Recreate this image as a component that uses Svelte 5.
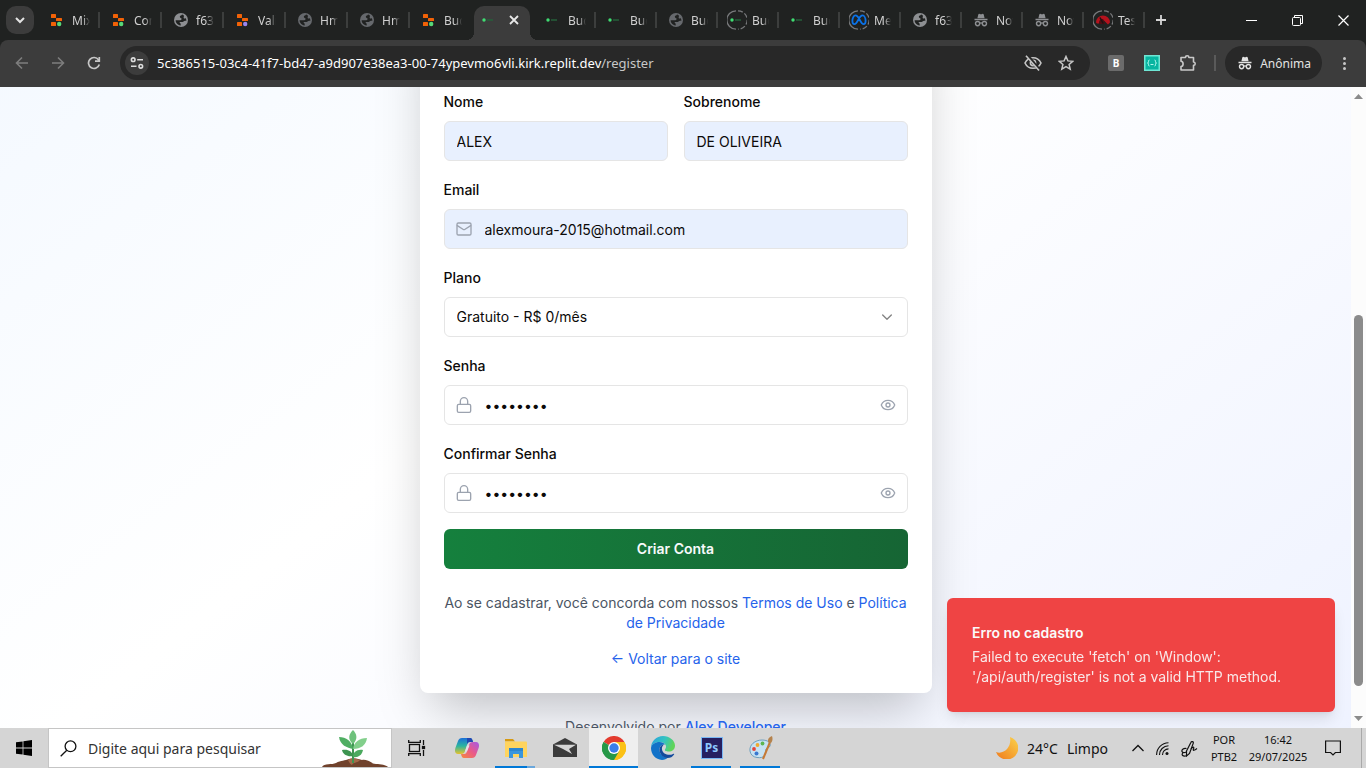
<script>
  const tabs = [
    { icon: 'replit', dot: '#57d977', title: 'Mixer' },
    { icon: 'replit', dot: '#57d977', title: 'Conta' },
    { icon: 'globe', title: 'f63a' },
    { icon: 'replit', dot: '#9a86f0', title: 'Valid' },
    { icon: 'globe', dim: true, title: 'Hmm' },
    { icon: 'globe', dim: true, title: 'Hmm' },
    { icon: 'replit', dot: '#57d977', title: 'Budget' },
    { icon: 'dash', title: 'Budget', active: true },
    { icon: 'dash', title: 'Budget' },
    { icon: 'dash', title: 'Budget', slim: true },
    { icon: 'globe', dim: true, title: 'Budget', slim: true },
    { icon: 'dash', ring: true, title: 'Budget', slim: true },
    { icon: 'dash', title: 'Budget', slim: true },
    { icon: 'meta', ring: true, title: 'Meta', slim: true },
    { icon: 'globe', title: 'f63a', slim: true },
    { icon: 'incognito', title: 'Nova', slim: true },
    { icon: 'incognito', title: 'Nova', slim: true },
    { icon: 'gauge', ring: true, title: 'Teste', slim: true }
  ];

  let nome = 'ALEX';
  let sobrenome = 'DE OLIVEIRA';
  let email = 'alexmoura-2015@hotmail.com';
  let senha = 'segredo1';
  let confirma = 'segredo1';
</script>

{#snippet incognito()}
  <svg width="16" height="16" viewBox="0 0 16 16" fill="none" aria-hidden="true">
    <path d="M4.4 6.2 5.3 2.6c.2-.7.8-.9 1.4-.6.9.4 1.7.4 2.6 0 .6-.3 1.2-.1 1.4.6l.9 3.6z" fill="currentColor" />
    <path d="M1.5 7.5h13" stroke="currentColor" stroke-width="1.5" />
    <circle cx="4.6" cy="11.6" r="2.1" stroke="currentColor" stroke-width="1.4" />
    <circle cx="11.4" cy="11.6" r="2.1" stroke="currentColor" stroke-width="1.4" />
    <path d="M6.6 11.3c.9-.6 1.9-.6 2.8 0" stroke="currentColor" stroke-width="1.3" />
  </svg>
{/snippet}

{#snippet lock()}
  <svg class="lead" width="16" height="16" viewBox="0 0 24 24" fill="none" stroke="currentColor" stroke-width="2" stroke-linecap="round" stroke-linejoin="round" aria-hidden="true">
    <rect x="2" y="11" width="20" height="12" rx="2" />
    <path d="M6.5 11V6.5a5.5 5.5 0 0 1 11 0V11" />
  </svg>
{/snippet}

{#snippet eye()}
  <svg width="16" height="16" viewBox="0 0 24 24" fill="none" stroke="currentColor" stroke-width="2" stroke-linecap="round" stroke-linejoin="round" aria-hidden="true">
    <path d="M2.06 12.35a1 1 0 0 1 0-.7 10.75 10.75 0 0 1 19.88 0 1 1 0 0 1 0 .7 10.75 10.75 0 0 1-19.88 0" />
    <circle cx="12" cy="12" r="3" />
  </svg>
{/snippet}

<div class="desktop">
  <header class="browser">
    <div class="strip">
      <button class="tabsearch" aria-label="Pesquisar guias">
        <svg width="10" height="10" viewBox="0 0 10 10" fill="none" stroke="#e3e3e3" stroke-width="2"><path d="M1 3l4 4 4-4" /></svg>
      </button>
      <div class="tabs">
        {#each tabs as tab}
          <div class="tab" class:active={tab.active} class:slim={tab.slim}>
            <span class="fav" class:dim={tab.dim}>
              {#if tab.ring}
                <svg class="ring" width="20" height="20" viewBox="0 0 20 20" fill="none" stroke="#77797b" stroke-width="1.3" aria-hidden="true">
                  <path d="M9 .8A9.2 9.2 0 0 0 9 19.2" />
                  <path d="M11 .8A9.2 9.2 0 0 1 11 19.2" stroke-dasharray="5 2" />
                </svg>
              {/if}
              {#if tab.icon === 'replit'}
                <svg width="16" height="16" viewBox="0 0 16 16" aria-hidden="true">
                  <rect x="2" y="2" width="5" height="4" rx=".6" fill="#f26207" />
                  <rect x="7" y="6" width="6" height="3" rx=".6" fill="#f26207" />
                  <rect x="2" y="10" width="5" height="4" rx=".6" fill="#f26207" />
                  <circle cx="10.2" cy="12" r="2.2" fill={tab.dot} />
                </svg>
              {:else if tab.icon === 'globe'}
                <svg width="16" height="16" viewBox="0 0 16 16" aria-hidden="true">
                  <circle cx="8" cy="8" r="7" fill="currentColor" />
                  <path d="M9 2.500c-.3 1.300-2.200.8-2.200 2.200 0 1.200 1.800 1.100 1.800 2.300 0 1-1.200 1.300-2.600 1.200H2.600c.1 2 1 3.400 2.400 4.400.9.600 1.800.900 2.700.9v-1.300c0-1.200-1.200-1.200-1.200-2.200h3c1.200 0 1.500-1.200 2.600-1.200h1.300c0-1-.3-2-.8-2.800-.6.700-1.600.700-1.900 0-.4-1 .9-1.700-.1-2.700-.5-.4-1-.700-1.600-.8z" fill="#202221" />
                </svg>
              {:else if tab.icon === 'dash'}
                <svg width="16" height="16" viewBox="0 0 16 16" aria-hidden="true">
                  <circle cx="3" cy="8" r="1.700" fill="#3fdc72" />
                  <path d="M6 8h6" stroke="#24613a" stroke-width="1.500" />
                </svg>
              {:else if tab.icon === 'meta'}
                <svg width="16" height="16" viewBox="0 0 16 16" fill="none" stroke="#0a72e8" stroke-width="1.800" aria-hidden="true">
                  <path d="M8 6.500C6.800 4.300 5.700 3.400 4.500 3.400 2.700 3.400 1.400 6 1.400 9c0 2 .7 3.200 2 3.200C5 12.200 6.200 10 8 6.500c1.200-2.200 2.300-3.100 3.500-3.100 1.800 0 3.100 2.600 3.100 5.600 0 2-.7 3.200-2 3.200-1.600 0-2.800-2.200-4.600-5.700z" />
                </svg>
              {:else if tab.icon === 'gauge'}
                <svg width="16" height="16" viewBox="0 0 16 16" aria-hidden="true">
                  <path d="M1 10.500a7 7 0 0 1 14 0l-2 2-5-5 1 4H2z" fill="#b5121d" />
                  <path d="M4 11a4 4 0 0 1 4-4l2 5H4z" fill="#4d0d12" />
                  <path d="M8.200 11.500 5 5.500" stroke="#1c1214" stroke-width="1.500" />
                </svg>
              {:else}
                {@render incognito()}
              {/if}
            </span>
            {#if tab.active}
              <button class="x" aria-label="Fechar guia">
                <svg width="10" height="10" viewBox="0 0 10 10" stroke="#e8e8e8" stroke-width="1.800"><path d="M1 1l8 8M9 1l-8 8" /></svg>
              </button>
            {:else}
              <span class="title">{tab.title}</span>
            {/if}
          </div>
        {/each}
      </div>
      <button class="newtab" aria-label="Nova guia">
        <svg width="12" height="12" viewBox="0 0 12 12" stroke="#d5d5d5" stroke-width="1.800"><path d="M6 1v10M1 6h10" /></svg>
      </button>
      <div class="winctl">
        <button aria-label="Minimizar"><svg width="11" height="11" viewBox="0 0 11 11" stroke="#fff"><path d="M0 5.500h11" /></svg></button>
        <button aria-label="Restaurar"><svg width="11" height="11" viewBox="0 0 11 11" stroke="#fff" fill="none"><rect x=".5" y="2.500" width="8" height="8" rx="1" /><path d="M2.500 2.500v-2h8v8h-2" /></svg></button>
        <button aria-label="Fechar"><svg width="11" height="11" viewBox="0 0 11 11" stroke="#fff" stroke-width="1.200"><path d="M.5.5l10 10M10.500.5l-10 10" /></svg></button>
      </div>
    </div>

    <div class="toolbar">
      <button class="nav off" aria-label="Voltar"><svg width="14" height="14" viewBox="0 0 14 14" fill="none" stroke="currentColor" stroke-width="1.600"><path d="M13 7H2M7 1.500 1.500 7 7 12.500" /></svg></button>
      <button class="nav off" aria-label="Avançar"><svg width="14" height="14" viewBox="0 0 14 14" fill="none" stroke="currentColor" stroke-width="1.600"><path d="M1 7h11M7 1.500 12.500 7 7 12.500" /></svg></button>
      <button class="nav" aria-label="Recarregar"><svg width="14" height="14" viewBox="0 0 14 14" fill="none" stroke="currentColor" stroke-width="1.700"><path d="M12.300 8.500A5.500 5.500 0 1 1 11.500 3.800L12 4.800" /><path d="M12.300 1v4.200H8" /></svg></button>
      <div class="omnibox">
        <button class="site" aria-label="Informações do site">
          <svg width="14" height="14" viewBox="0 0 14 14" fill="none" stroke="#dcdcdc" stroke-width="1.600"><circle cx="3.200" cy="3.700" r="1.800" /><path d="M7.200 3.700H13M1 10.300h5.500" /><circle cx="10.800" cy="10.300" r="1.800" /></svg>
        </button>
        <span class="url">5c386515-03c4-41f7-bd47-a9d907e38ea3-00-74ypevmo6vli.kirk.replit.dev<span class="path">/register</span></span>
        <button class="obtn" aria-label="Cookies de terceiros bloqueados">
          <svg width="18" height="16" viewBox="0 0 18 16" fill="none" stroke="currentColor" stroke-width="1.600"><path d="M1 8c1.600-3.400 4.500-5.300 8-5.300S15.400 4.600 17 8c-1.600 3.400-4.500 5.300-8 5.300S2.600 11.400 1 8z" /><circle cx="9" cy="8" r="2.600" /><path d="M3.500.5 16 15.500" stroke="#282828" stroke-width="3" /><path d="M2 .8 15 15.500" /></svg>
        </button>
        <button class="obtn" aria-label="Adicionar aos favoritos">
          <svg width="16" height="16" viewBox="0 0 16 16" fill="none" stroke="currentColor" stroke-width="1.500"><path d="M8 1.500l1.900 4.400 4.800.4-3.600 3.200 1.100 4.700L8 11.700l-4.200 2.500 1.100-4.700L1.300 6.300l4.800-.4z" /></svg>
        </button>
      </div>
      <div class="exts">
        <button class="ext b" aria-label="Extensão B">B</button>
        <button class="ext json" aria-label="Extensão JSON">
          <svg width="16" height="16" viewBox="0 0 16 16" fill="none"><rect width="16" height="16" fill="#6fe6d4" /><rect x="1.500" y="1.500" width="13" height="13" fill="#08b5a1" /><path d="M5.500 5c-1 0-1 .5-1 1.500S4.200 8 3.500 8c.7 0 1 .5 1 1.500s0 1.500 1 1.500M10.500 5c1 0 1 .5 1 1.500s.3 1.500 1 1.500c-.7 0-1 .5-1 1.500s0 1.500-1 1.500M6.500 9.500h3" stroke="#c6fff6" stroke-width=".9" /></svg>
        </button>
        <button class="ext" aria-label="Extensões">
          <svg width="18" height="18" viewBox="0 0 18 18" fill="none" stroke="#c9c9c9" stroke-width="1.600" stroke-linejoin="round"><path d="M2 3.500h4.500a1.700 1.700 0 0 1 3.400 0H14.500V8a1.700 1.700 0 0 1 0 3.400V16H2v-3.500c2.800-.3 2.800-4.900 0-5.200z" /></svg>
        </button>
      </div>
      <span class="divider"></span>
      <button class="anon">{@render incognito()}<span>Anônima</span></button>
      <button class="more" aria-label="Menu"><i></i><i></i><i></i></button>
    </div>
  </header>

  <div class="viewport">
    <main class="page">
      <form class="card" on:submit|preventDefault>
        <div class="pair">
          <div class="field">
            <label for="nome">Nome</label>
            <input id="nome" class="filled" type="text" bind:value={nome} />
          </div>
          <div class="field">
            <label for="sobrenome">Sobrenome</label>
            <input id="sobrenome" class="filled" type="text" bind:value={sobrenome} />
          </div>
        </div>
        <div class="field">
          <label for="email">Email</label>
          <div class="wrap">
            <svg class="lead" width="16" height="16" viewBox="0 0 24 24" fill="none" stroke="currentColor" stroke-width="2" stroke-linecap="round" stroke-linejoin="round" aria-hidden="true">
              <rect x="1.500" y="3" width="21" height="18" rx="2" />
              <path d="m22 7-8.970 5.700a1.940 1.940 0 0 1-2.060 0L2 7" />
            </svg>
            <input id="email" class="filled iconed" type="email" bind:value={email} />
          </div>
        </div>
        <div class="field">
          <label for="plano">Plano</label>
          <div class="wrap">
            <select id="plano">
              <option>Gratuito - R$ 0/mês</option>
            </select>
            <svg class="trail chev" width="16" height="16" viewBox="0 0 24 24" fill="none" stroke="currentColor" stroke-width="2" stroke-linecap="round" stroke-linejoin="round" aria-hidden="true"><path d="m5.500 9 6.500 6.500L18.500 9" /></svg>
          </div>
        </div>
        <div class="field">
          <label for="senha">Senha</label>
          <div class="wrap">
            {@render lock()}
            <input id="senha" class="iconed" type="password" bind:value={senha} />
            <button type="button" class="trail" aria-label="Mostrar senha">{@render eye()}</button>
          </div>
        </div>
        <div class="field">
          <label for="confirma">Confirmar Senha</label>
          <div class="wrap">
            {@render lock()}
            <input id="confirma" class="iconed" type="password" bind:value={confirma} />
            <button type="button" class="trail" aria-label="Mostrar confirmação">{@render eye()}</button>
          </div>
        </div>
        <button class="submit" type="submit">Criar Conta</button>
        <p class="terms">Ao se cadastrar, você concorda com nossos <a href="#termos">Termos de Uso</a> e <a href="#privacidade">Política de Privacidade</a></p>
        <p class="back"><a href="#site">← Voltar para o site</a></p>
      </form>
      <p class="credit">Desenvolvido por <a href="#dev">Alex Developer</a></p>
    </main>
    <div class="toast" role="alert">
      <strong>Erro no cadastro</strong>
      <p>Failed to execute 'fetch' on 'Window': '/api/auth/register' is not a valid HTTP method.</p>
    </div>
    <div class="scroll" aria-hidden="true">
      <svg width="9" height="5" viewBox="0 0 9 5"><path d="M0 5 4.500 0 9 5z" fill="#8b8b8b" /></svg>
      <div class="track"><div class="thumb"></div></div>
      <svg width="9" height="5" viewBox="0 0 9 5"><path d="M0 0 4.500 5 9 0z" fill="#8b8b8b" /></svg>
    </div>
  </div>

  <footer class="taskbar">
    <button class="start" aria-label="Iniciar">
      <svg width="16" height="16" viewBox="0 0 16 16" fill="#000"><path d="M0 2.300 6.600 1.400v6.200H0zM7.400 1.300 16 0v7.600H7.400zM0 8.400h6.600v6.200L0 13.700zM7.400 8.400H16V16l-8.600-1.300z" /></svg>
    </button>
    <label class="search">
      <svg width="17" height="17" viewBox="0 0 17 17" fill="none" stroke="#111" stroke-width="1.300" aria-hidden="true"><circle cx="10.500" cy="6.300" r="5.400" /><path d="M6.800 10.200.7 16.300" /></svg>
      <input type="text" placeholder="Digite aqui para pesquisar" aria-label="Digite aqui para pesquisar" />
      <svg class="plant" width="66" height="38" viewBox="0 0 66 38" aria-hidden="true">
        <path d="M0 38c2-4 10-2 14-4 5-3 9-2 13-4 5-2 10 0 13 1 7-1 9 4 14 4s10 1 12 3z" fill="#70422c" />
        <path d="M26 31c4-3 9-1 12 0-2 3-7 2-8 5-2-1-3-3-4-5z" fill="#a3694a" />
        <path d="M31 34V8" stroke="#3e9450" stroke-width="2" />
        <path d="M31 15c-6-5-4-10 0-14 4 4 5 9 0 14z" fill="#6fc27c" />
        <path d="M31 20C25 19 18 16 17 8c7 0 13 4 14 12z" fill="#4fae62" />
        <path d="M31 20c1-7 6-11 14-11-1 7-6 11-14 11z" fill="#82cf8b" />
        <path d="M31 27c-5 1-10-1-11-6 6-1 10 1 11 6z" fill="#3d9450" />
        <path d="M31 28c0-5 4-8 10-7-1 5-5 8-10 7z" fill="#4ba95e" />
      </svg>
    </label>
    <nav class="apps" aria-label="Aplicativos">
      <button aria-label="Visão de tarefas">
        <svg width="18" height="16" viewBox="0 0 18 16" fill="none" stroke="#111" stroke-width="1.300"><rect x="1.500" y="4.500" width="10" height="7" /><path d="M.7 0v2.300h11.600V0M.7 16v-2.300h11.600V16M15.500 0v5M15.500 10v6" /><rect x="14.500" y="6.500" width="2" height="2" fill="#111" /></svg>
      </button>
      <button aria-label="Copilot">
        <svg width="24" height="22" viewBox="0 0 24 22">
          <defs>
            <linearGradient id="cpA" x1="0" y1="0" x2="0" y2="1"><stop offset="0" stop-color="#1b6fd8" /><stop offset=".5" stop-color="#2bb5a0" /><stop offset="1" stop-color="#e8c22c" /></linearGradient>
            <linearGradient id="cpB" x1="1" y1="0" x2="0" y2="1"><stop offset="0" stop-color="#a45be8" /><stop offset=".5" stop-color="#ea5a88" /><stop offset="1" stop-color="#f58a3c" /></linearGradient>
          </defs>
          <path d="M7 1h8c2 0 2.500 2 3 4h-3c-2 0-2.500 1-3 3l-2 6c-.6 2-1.500 3-4 3H3c-3 0-3.500-3-2.600-6L3 4c.7-2 2-3 4-3z" fill="url(#cpA)" />
          <path d="M17 21H9c-2 0-2.500-2-3-4h3c2 0 2.500-1 3-3l2-6c.6-2 1.500-3 4-3h3c3 0 3.500 3 2.600 6L21 18c-.7 2-2 3-4 3z" fill="url(#cpB)" />
          <path d="M12 1h3c2 0 2.500 2 3 4h-3c-1.500 0-2.400.8-3 2.500z" fill="#2147b0" />
          <path d="M14.500 8.500h-2.400L10 14.500h2z" fill="#e9dfe6" />
        </svg>
      </button>
      <button class="run twin" aria-label="Explorador de Arquivos">
        <svg width="22" height="20" viewBox="0 0 22 20"><path d="M0 1h8l2 2.500H0z" fill="#d79a12" /><path d="M0 3.500h21a1 1 0 0 1 1 1V19H0z" fill="#ffd45e" /><path d="M4 10h14v10h-4v-4H8v4H4z" fill="#3a96dd" /><path d="M4 10h14v3H4z" fill="#2d86cf" /></svg>
      </button>
      <button aria-label="Email">
        <svg width="24" height="20" viewBox="0 0 24 20" fill="#3b3b3b"><path d="M0 6.500 12 0l12 6.500V19H0z" /><path d="M1 6.800h22L16 11l3 5-9-5z" fill="#d5d5d5" /></svg>
      </button>
      <button class="run on" aria-label="Google Chrome">
        <svg width="24" height="24" viewBox="0 0 24 24"><path d="M12 12 1.600 6A12 12 0 0 1 22.400 6z" fill="#e33b2e" /><path d="M12 12 22.400 6A12 12 0 0 1 12 24l0-12z" fill="#fbc116" /><path d="M12 12v12A12 12 0 0 1 1.600 6z" fill="#269847" /><path d="M12 6h10.400A12 12 0 0 1 12 24l5.200-9z" fill="#fbc116" /><path d="M1.600 6 6.800 15 12 18l-1 6A12 12 0 0 1 1.600 6z" fill="#269847" /><path d="M6.800 15 12 18l5.200-3L12 24z" fill="#269847" /><circle cx="12" cy="12" r="6" fill="#fff" /><circle cx="12" cy="12" r="4.700" fill="#3b7de9" /></svg>
      </button>
      <button aria-label="Microsoft Edge">
        <svg width="24" height="24" viewBox="0 0 24 24">
          <defs><linearGradient id="edA" x1="0" y1="0" x2="1" y2=".3"><stop offset="0" stop-color="#2a9fe0" /><stop offset=".6" stop-color="#34c4c0" /><stop offset="1" stop-color="#5fd45a" /></linearGradient></defs>
          <path d="M0 12C0 5 5.500 0 12 0s12 4.500 12 9.500c0 4-3 6-6 6-3.500 0-4.500-1-4-2s1-1.500 1-3C15 8 12 6 8.500 6 4 6 .5 8.500 0 12z" fill="url(#edA)" />
          <path d="M0 12C.5 8.500 4 6 8.500 6c2.500 0 4.500 1 5.600 2.500-3-.5-5.600 1.500-5.600 5C8.500 18 12 22 17 21.500c-1.500 1.500-3.500 2.500-6 2.500C4.500 23.500 0 18.500 0 12z" fill="#1272c8" />
          <path d="M8.500 13.500c0-3 2-5 4.500-5-1.500 1-2.500 3-2 5 .6 3.500 4 5.500 8 5.300 1.500 0 2.800-.6 3.600-1 .5-.2.800.200.500.700C21.500 21 19.500 22 16.500 22c-4.500 0-8-4-8-8.500z" fill="#134a9c" />
        </svg>
      </button>
      <button class="run" aria-label="Photoshop"><span class="ps">Ps</span></button>
      <button class="run" aria-label="Paint">
        <svg width="24" height="24" viewBox="0 0 24 24"><path d="M1 15C0 9 6 4 13 4c6 0 9 3 8 6-.6 2-3 1.600-4 3s.6 3.500-1 6c-1.500 2.500-4.500 3-8 2.500C4 21 1.500 18.500 1 15z" fill="#c7e2f2" stroke="#6e9fbd" /><circle cx="5" cy="13" r="1.900" fill="#e2453c" /><circle cx="8.500" cy="9" r="1.900" fill="#f0a92e" /><circle cx="13.500" cy="7.500" r="1.900" fill="#5cb551" /><circle cx="7.500" cy="17.500" r="2" fill="#3a78cf" /><path d="m21 6-7 17" stroke="#c67a36" stroke-width="2" /><path d="M19 6c-.5-3 1-5 4-6 1 3 .5 5-1 7z" fill="#b5834d" /></svg>
      </button>
    </nav>
    <div class="tray">
      <div class="weather">
        <svg width="22" height="22" viewBox="0 0 22 22" aria-hidden="true"><defs><linearGradient id="mn" x1="1" y1="0" x2="0" y2="1"><stop offset="0" stop-color="#fbd34a" /><stop offset="1" stop-color="#f07a1c" /></linearGradient></defs><path d="M14 0a11.500 11.500 0 1 1-14 15C8 18 16 10 14 0z" fill="url(#mn)" /></svg>
        <span>24°C</span><span>Limpo</span>
      </div>
      <svg class="up" width="12" height="8" viewBox="0 0 12 8" fill="none" stroke="#111" stroke-width="1.300" aria-hidden="true"><path d="M.5 7 6 1.500 11.500 7" /></svg>
      <svg width="13" height="13" viewBox="0 0 13 13" fill="none" stroke="#111" stroke-width="1.100" aria-hidden="true"><path d="M.6 13A12 12 0 0 1 12.500.8M3.500 13A9 9 0 0 1 12.500 3.800M6.500 13a6 6 0 0 1 6-6.100" /><circle cx="11" cy="11.500" r="1.500" fill="#111" stroke="none" /></svg>
      <svg width="17" height="17" viewBox="0 0 17 17" fill="none" stroke="#111" stroke-width="1.200" aria-hidden="true"><path d="M5.500 11 10 2.200c.5-1.200 2.700-.5 2.300.9L8.500 13.500l-3 2.500z" /><path d="M5.500 8.500C2 8 .5 10 1 11.500s3 1 4.500.5M2 12.500C0 15 2 17 5.500 15.800M10 9c2-3 3.500-2 2.500 0s1 1.500 3.500-.5" /></svg>
      <div class="duo"><span>POR</span><span>PTB2</span></div>
      <div class="duo clock"><span>16:42</span><span>29/07/2025</span></div>
      <svg class="note" width="16" height="16" viewBox="0 0 16 16" fill="none" stroke="#111" stroke-width="1.200" aria-hidden="true"><path d="M.6 1h14.800v11.500h-5L8 15l-2.400-2.500h-5z" /></svg>
      <span class="peek"></span>
    </div>
  </footer>
</div>

<style>
  :global(body) { margin: 0; overflow: hidden; }
  .desktop { height: 100vh; display: flex; flex-direction: column; overflow: hidden; font-family: "Noto Sans", "Open Sans", sans-serif; }
  .desktop :global(*) { box-sizing: border-box; }
  svg { display: block; flex: none; }
  button { border: 0; padding: 0; margin: 0; background: none; color: inherit; font: inherit; }
  p { margin: 0; }

  .browser { flex: none; background: #202221; color: #e3e3e3; }
  .strip { height: 40px; display: flex; align-items: center; }
  .tabsearch { width: 28px; height: 28px; margin: 0 4px 0 6px; border-radius: 10px; background: #3c3c3c; display: grid; place-items: center; flex: none; }
  .tabs { display: flex; align-self: stretch; min-width: 0; }
  .tab { position: relative; width: 62px; min-width: 0; display: flex; align-items: center; gap: 7px; padding: 0 10px 0 11px; font-size: 12px; color: #d0d0d0; }
  .tab.slim { width: 61px; }
  .tab::after { content: ""; position: absolute; right: 0; top: 12px; width: 2px; height: 16px; background: #3c3e3d; }
  .tab.active::after, .tab:has(+ .active)::after { display: none; }
  .tab.active { margin: 6px 4px 0 2px; width: 56px; padding: 0 11px 6px 7px; background: #3c3c3c; border-radius: 10px 10px 0 0; justify-content: space-between; }
  .tab.active::before { content: ""; position: absolute; left: -8px; right: -8px; bottom: 0; height: 8px; background: radial-gradient(circle at 0 0, transparent 8px, #3c3c3c 8px) left / 8px 8px no-repeat, radial-gradient(circle at 100% 0, transparent 8px, #3c3c3c 8px) right / 8px 8px no-repeat; }
  .fav { position: relative; width: 16px; height: 16px; flex: none; color: #8d8f92; }
  .fav.dim { color: #66696d; }
  .ring { position: absolute; left: -2px; top: -2px; }
  .title { flex: 1; overflow: hidden; white-space: nowrap; -webkit-mask-image: linear-gradient(90deg, #000 60%, transparent); mask-image: linear-gradient(90deg, #000 60%, transparent); }
  .newtab { width: 32px; height: 28px; display: grid; place-items: center; flex: none; }
  .winctl { margin-left: auto; display: flex; align-self: stretch; }
  .winctl button { width: 46px; display: grid; place-items: center; }

  .toolbar { height: 47px; padding: 0 8px 1px 8px; background: #3c3c3c; border-radius: 8px 8px 0 0; display: flex; align-items: center; }
  .nav { width: 28px; height: 28px; margin-right: 8px; display: grid; place-items: center; color: #c7c7c7; flex: none; }
  .off { color: #7d7d7d; }
  .omnibox { flex: 1; min-width: 0; height: 34px; margin-left: 4px; padding: 0 11px 0 5px; border-radius: 17px; background: #282828; display: flex; align-items: center; }
  .site { width: 24px; height: 24px; border-radius: 12px; background: #3c3c3c; display: grid; place-items: center; flex: none; }
  .url { flex: 1; min-width: 0; margin-left: 8px; font-size: 13px; color: #fff; white-space: nowrap; overflow: hidden; }
  .path { color: #c7c7c7; }
  .obtn { width: 26px; height: 26px; margin-left: 7px; display: grid; place-items: center; color: #c7c7c7; }
  .exts { display: flex; gap: 18px; margin-left: 17px; align-items: center; }
  .ext { width: 18px; height: 18px; display: grid; place-items: center; }
  .ext.b { background: #6b6b6b; color: #fff; font-size: 10px; font-weight: 700; width: 16px; height: 16px; margin: 1px; border-radius: 2px; }
  .divider { width: 2px; height: 16px; margin: 0 9px 0 17px; background: #5a5a5a; }
  .anon { height: 34px; padding: 0 11px 0 12px; border-radius: 17px; background: #282828; display: flex; align-items: center; gap: 7px; font-size: 12px; color: #e3e3e3; }
  .more { width: 28px; height: 28px; margin-left: 8px; display: flex; flex-direction: column; align-items: center; justify-content: center; gap: 2px; }
  .more i { width: 3px; height: 3px; border-radius: 2px; background: #c7c7c7; }

  .viewport { position: relative; flex: 1; min-height: 0; display: flex; overflow: hidden; font-family: Inter, sans-serif; font-size: 14px; line-height: 20px; color: #0c0a09; }
  .page { flex: 1; min-width: 0; display: flex; flex-direction: column; align-items: center; overflow: hidden; background: linear-gradient(to bottom right, #eff6ff, #fff, #eef2ff) 0 -368px / 100% 1057px no-repeat; }
  .card { width: 100%; max-width: 512px; flex: none; margin-top: -80px; padding: 84px 24px 24px; display: flex; flex-direction: column; gap: 18px; background: #fff; border-radius: 8px; box-shadow: 0 25px 50px -12px rgba(0, 0, 0, .25); }
  .pair { display: grid; grid-template-columns: 1fr 1fr; gap: 16px; }
  .field { display: flex; flex-direction: column; gap: 8px; min-width: 0; }
  .field label { font-weight: 500; line-height: 22px; }
  .wrap { position: relative; display: flex; color: #9ca3af; }
  .field input, .field select { width: 100%; height: 40px; padding: 0 12px; border: 1px solid #e5e5e5; border-radius: 6px; background: #fff; font: inherit; color: #0c0a09; appearance: none; outline: none; }
  .field input.filled { background: #e8f0fe; }
  .field input.iconed { padding-left: 40px; padding-right: 40px; }
  .lead { position: absolute; left: 12px; top: 12px; }
  .trail { position: absolute; right: 12px; top: 12px; }
  .chev { right: 13px; pointer-events: none; color: #838383; }
  .submit { height: 40px; margin-top: -2px; border-radius: 6px; background: linear-gradient(to right, #15803d, #166534); color: #f8fafc; font-weight: 600; }
  .terms { margin-top: 6px; text-align: center; color: #4b5563; }
  .back { margin-top: -2px; text-align: center; }
  a { color: #2563eb; text-decoration: none; }
  .credit { margin-top: 24px; color: #4b5563; }
  .credit a { font-weight: 500; }
  .toast { position: absolute; right: 31px; bottom: 16px; width: 388px; padding: 25px; border-radius: 6px; background: #ef4444; color: #fafafa; box-shadow: 0 10px 15px -3px rgba(0, 0, 0, .1), 0 4px 6px -4px rgba(0, 0, 0, .1); }
  .toast strong { display: block; margin-bottom: 4px; font-weight: 600; }
  .toast p { opacity: .9; }
  .scroll { width: 15px; flex: none; display: flex; flex-direction: column; align-items: center; justify-content: space-between; padding: 7px 0; background: #fcfcfc; }
  .track { flex: 1; margin: 2px 0; padding-top: 214px; }
  .thumb { width: 9px; height: 371px; border-radius: 5px; background: #8b8b8b; }

  .taskbar { height: 40px; flex: none; display: flex; background: #d5d5d5; color: #111; font-size: 14px; }
  .start { width: 48px; display: grid; place-items: center; flex: none; }
  .search { position: relative; width: 344px; flex: 0 1 auto; display: flex; align-items: center; padding-left: 11px; gap: 11px; background: #fff; border: 1px solid #c5c5c5; }
  .search input { flex: 1; min-width: 0; border: 0; padding: 0; outline: none; background: none; font: inherit; }
  .search input::placeholder { color: #333; opacity: 1; }
  .plant { align-self: flex-end; margin-right: 3px; }
  .apps { display: flex; }
  .apps button { position: relative; width: 49px; display: grid; place-items: center; }
  .apps button:first-child { width: 50px; }
  .run::after { content: ""; position: absolute; bottom: 0; left: 4px; right: 5px; height: 2px; background: #0078d7; }
  .run.twin::after { background: linear-gradient(90deg, #0078d7 80%, #6aa7dc 80%); }
  .run.on { background: #efefef; }
  .run.on::after { left: 0; right: 0; }
  .ps { width: 22px; height: 22px; border: 1px solid #7ab8f5; background: #261f60; color: #8dc8ff; font-size: 12px; font-weight: 700; line-height: 20px; }
  .tray { margin-left: auto; display: flex; align-items: center; }
  .weather { display: flex; align-items: center; gap: 9px; margin-right: 24px; }
  .tray > svg { margin-right: 12px; }
  .duo { display: flex; flex-direction: column; align-items: center; font-size: 11px; line-height: 17px; width: 28px; }
  .clock { width: 58px; margin: 0 18px 0 11px; }
  .tray > .note { margin-right: 20px; }
  .peek { width: 5px; align-self: stretch; border-left: 1px solid #a9a9a9; }
</style>
